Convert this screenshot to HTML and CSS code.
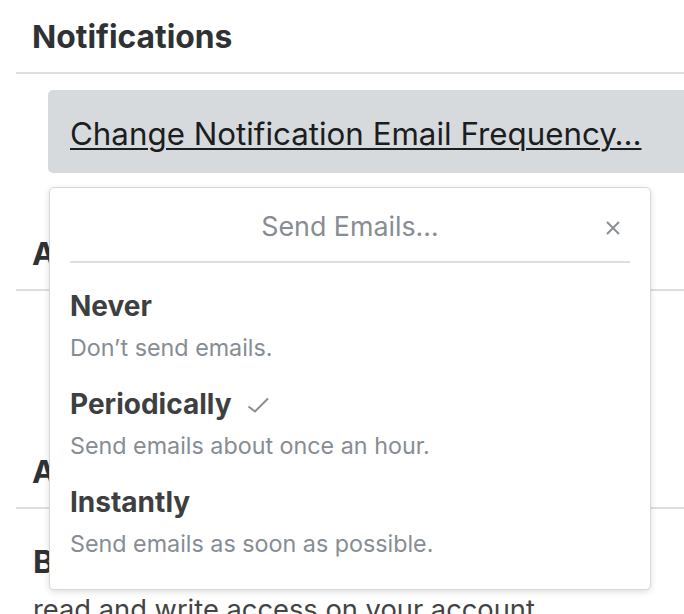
FILE: index.html
```html
<!DOCTYPE html>
<html lang="en">
<head>
<meta charset="utf-8">
<title>Notifications</title>
<link rel="stylesheet" href="styles.css">
</head>
<body>
<div class="settings">
  <section class="section">
    <h2 class="section-title">Notifications</h2>
    <div class="section-body">
      <div class="action-bar">
        <a class="action-link" href="#">Change Notification Email Frequency…</a>
      </div>
    </div>
  </section>

  <section class="section">
    <h2 class="section-title">Account Activity</h2>
    <div class="section-body spacer">
      <p class="hidden-text">Review the recent activity on your account.</p>
    </div>
  </section>

  <section class="section">
    <h2 class="section-title">Authorized Applications</h2>
    <div class="section-body">
      <div class="app">
        <div class="app-name">Bot Integration</div>
        <p class="app-desc">read and write access on your account.</p>
      </div>
    </div>
  </section>
</div>

<div class="menu" role="dialog" aria-label="Send Emails…">
  <div class="menu-header">
    <span class="menu-title">Send Emails…</span>
    <button class="menu-close" aria-label="Close">
      <svg width="14" height="14" viewBox="0 0 14 14"><path d="M1 1 L13 13 M13 1 L1 13" stroke="#8a8f94" stroke-width="2" fill="none"/></svg>
    </button>
  </div>
  <ul class="menu-list">
    <li class="menu-item">
      <div class="item-title">Never</div>
      <div class="item-desc">Don’t send emails.</div>
    </li>
    <li class="menu-item">
      <div class="item-title">Periodically <svg class="check" width="22" height="16" viewBox="0 0 22 16"><polyline points="1.5,9.5 8,14.5 21,1.5" stroke="#8c8c8c" stroke-width="2" fill="none"/></svg></div>
      <div class="item-desc">Send emails about once an hour.</div>
    </li>
    <li class="menu-item">
      <div class="item-title">Instantly</div>
      <div class="item-desc">Send emails as soon as possible.</div>
    </li>
  </ul>
</div>
</body>
</html>
```

FILE: styles.css
```css
html, body {
  margin: 0;
  padding: 0;
  background: #fff;
  overflow: hidden;
}

body {
  font-family: Inter, Roboto, "Liberation Sans", sans-serif;
  color: #333;
  width: 684px;
  height: 614px;
  position: relative;
}

.settings {
  padding-left: 16px;
}

.section-title {
  margin: 0;
  font-size: 31.8px;
  font-weight: 700;
  line-height: 40px;
  color: #2f3235;
  padding: 17px 0 15px 16px;
  border-bottom: 2px solid #dcdfe2;
  white-space: nowrap;
}

.section-body {
  padding: 16px 0 0 32px;
  margin-right: -10px;
}

.action-bar {
  background: #d7dadd;
  border-radius: 5px 0 0 5px;
  padding: 4px 0 0 22px;
  height: 79px;
  line-height: 80px;
}

.action-link {
  font-size: 31.3px;
  color: #1b1d1f;
  text-decoration: underline;
  text-decoration-thickness: 2px;
  text-underline-offset: 3px;
  white-space: nowrap;
}

.section + .section .section-title {
  padding-top: 61px;
}

.spacer {
  height: 84px;
}

.hidden-text {
  margin: 0;
  padding-left: 40px;
  font-size: 24px;
  color: #666;
}

.app-name {
  font-size: 31.8px;
  font-weight: 700;
  color: #2f3235;
  margin-left: -15px;
  line-height: 40px;
  padding-top: 17px;
  white-space: nowrap;
}

.app-desc {
  margin: 8px 0 0 -15px;
  font-size: 27.3px;
  line-height: 40px;
  color: #444;
  white-space: nowrap;
}

/* overlay menu */
.menu {
  position: absolute;
  left: 49px;
  top: 187px;
  width: 600px;
  height: 401px;
  background: #fff;
  border: 1px solid #d5d8db;
  border-radius: 5px;
  box-shadow: 0 2px 6px rgba(27, 31, 35, 0.15);
}

.menu-header {
  margin: 0 20px;
  padding-top: 3px;
  height: 70px;
  line-height: 70px;
  border-bottom: 2px solid #dcdfe2;
  text-align: center;
  position: relative;
}

.menu-title {
  font-size: 26.8px;
  color: #868d94;
}

.menu-close {
  position: absolute;
  right: 10px;
  top: 33px;
  width: 14px;
  height: 14px;
  padding: 0;
  border: 0;
  background: none;
  display: flex;
}

.menu-list {
  list-style: none;
  margin: 0;
  padding: 5px 20px 0 20px;
}

.menu-item {
  padding-top: 20px;
  height: 78px;
}

.item-title {
  font-size: 28px;
  font-weight: 700;
  line-height: 36px;
  color: #3d3f41;
  display: flex;
  align-items: center;
  gap: 15px;
}

.check {
  margin-top: 2px;
}

.item-desc {
  font-size: 23.3px;
  line-height: 36px;
  margin-top: 6px;
  color: #868d94;
}
```
